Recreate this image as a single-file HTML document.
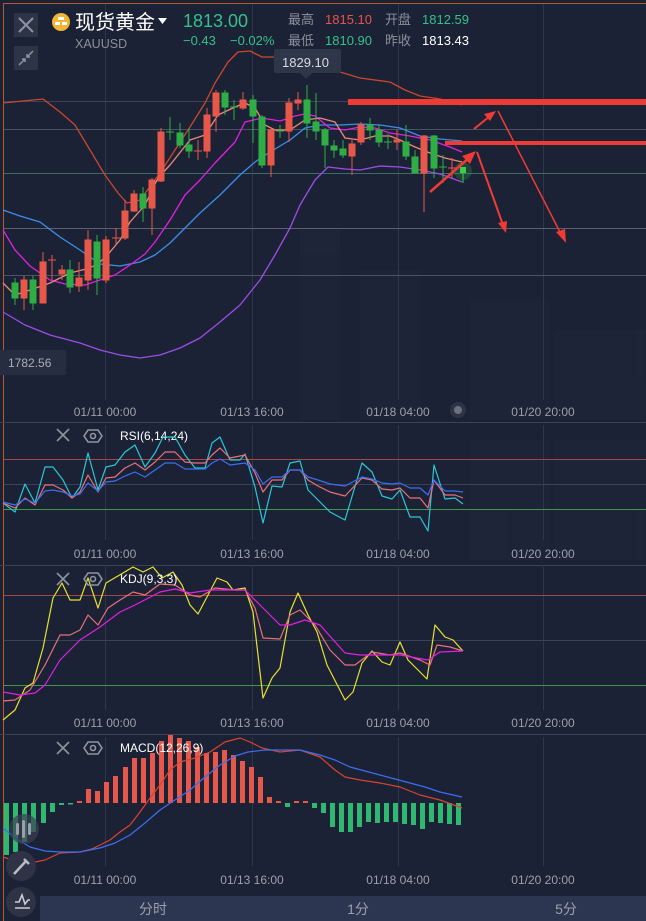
<!DOCTYPE html>
<html><head><meta charset="utf-8"><style>
html,body{margin:0;padding:0;background:#1c2235;width:646px;height:921px;overflow:hidden;font-family:"Liberation Sans","Noto Sans CJK SC",sans-serif}
svg{display:block}
text{font-family:"Liberation Sans","Noto Sans CJK SC",sans-serif}
</style></head><body>
<svg width="646" height="921" viewBox="0 0 646 921" xmlns="http://www.w3.org/2000/svg">
<rect width="646" height="921" fill="#1c2235"/>
<!-- faint buildings -->
<g fill="#232a3e" opacity="0.35">
<rect x="300" y="230" width="40" height="190"/><rect x="360" y="270" width="60" height="150"/><rect x="470" y="300" width="80" height="120"/><rect x="555" y="330" width="90" height="90"/>
<rect x="470" y="440" width="80" height="120"/><rect x="555" y="440" width="90" height="120"/>
</g>
<!-- borders -->
<line x1="3.5" y1="3" x2="3.5" y2="921" stroke="#b85a2a" stroke-width="1"/>
<line x1="3" y1="3.5" x2="646" y2="3.5" stroke="#b85a2a" stroke-width="1"/>
<!-- grid verticals -->
<g stroke="#2e364b" stroke-width="1">
<line x1="105.5" y1="4" x2="105.5" y2="400"/><line x1="252.5" y1="4" x2="252.5" y2="400"/><line x1="398.5" y1="4" x2="398.5" y2="400"/><line x1="543.5" y1="4" x2="543.5" y2="400"/>
<line x1="105.5" y1="425" x2="105.5" y2="540"/><line x1="252.5" y1="425" x2="252.5" y2="540"/><line x1="398.5" y1="425" x2="398.5" y2="540"/><line x1="543.5" y1="425" x2="543.5" y2="540"/>
<line x1="105.5" y1="567" x2="105.5" y2="710"/><line x1="252.5" y1="567" x2="252.5" y2="710"/><line x1="398.5" y1="567" x2="398.5" y2="710"/><line x1="543.5" y1="567" x2="543.5" y2="710"/>
<line x1="105.5" y1="737" x2="105.5" y2="866"/><line x1="252.5" y1="737" x2="252.5" y2="866"/><line x1="398.5" y1="737" x2="398.5" y2="866"/><line x1="543.5" y1="737" x2="543.5" y2="866"/>
</g>
<!-- main horizontals -->
<line x1="4" y1="129.5" x2="646" y2="129.5" stroke="#4a5266"/>
<line x1="4" y1="173.5" x2="646" y2="173.5" stroke="#3d6b66"/>
<line x1="4" y1="228.5" x2="646" y2="228.5" stroke="#5a6070"/>
<line x1="4" y1="275.5" x2="646" y2="275.5" stroke="#4a5266"/>
<line x1="4" y1="101.5" x2="646" y2="101.5" stroke="#3a4256"/>
<!-- bands -->
<g fill="none" stroke-width="1.3" stroke-linejoin="round">
<polyline stroke="#c8472e" points="3,103 43,99 60,112 75,125 90,150 105,175 118,193 127,203 140,200 160,173 175,150 190,127 205,103 215,83 228,62 238,52 250,51 262,57 272,57 285,58 300,64 320,66 340,72 360,78 390,82 405,90 420,96 440,99 462,105"/>
<polyline stroke="#3b8ee8" points="3,210 20,216 40,222 60,237 80,250 100,264 120,266 140,262 155,255 170,243 185,228 200,213 220,195 240,175 255,162 270,152 290,140 305,128 320,125 340,125 360,124 380,125 400,128 420,136 440,139 462,141"/>
<polyline stroke="#9b4de6" points="3,312 25,325 50,335 80,343 100,350 120,355 140,358 160,355 180,348 200,338 220,322 240,305 260,280 275,255 290,228 300,205 315,180 328,167 345,169 360,170 380,166 400,167 420,170 440,174 462,182"/>
<polyline stroke="#e020e0" points="3,230 15,250 30,266 50,280 65,284 85,285 100,280 115,275 130,265 145,254 155,242 170,220 185,195 200,180 215,163 235,142 245,122 262,118 280,121 295,116 305,114 315,116 330,128 345,130 360,127 375,128 390,133 410,136 430,140 450,147 462,152"/>
<polyline stroke="#e88a7a" points="3,283 15,295 30,290 50,283 70,273 90,268 100,262 110,252 120,240 130,222 145,205 158,178 170,165 190,140 205,135 218,115 235,107 245,103 255,108 265,125 275,130 290,130 305,120 320,118 335,122 345,138 360,140 375,136 390,136 400,140 415,147 430,153 445,158 462,162"/>
</g>
<!-- candles -->
<g stroke-width="1">
<g fill="#2fae45" stroke="#2fae45">
<line x1="15" y1="278" x2="15" y2="305"/><rect x="12" y="283" width="6" height="15"/>
<line x1="33" y1="276" x2="33" y2="310"/><rect x="30" y="280" width="6" height="23"/>
<line x1="70" y1="260" x2="70" y2="293"/><rect x="67" y="270" width="6" height="17"/>
<line x1="97" y1="235" x2="97" y2="295"/><rect x="94" y="242" width="6" height="36"/>
<line x1="143" y1="187" x2="143" y2="222"/><rect x="140" y="194" width="6" height="14"/>
<line x1="170" y1="117" x2="170" y2="140"/><line x1="166" y1="132" x2="174" y2="132"/>
<line x1="180" y1="123" x2="180" y2="148"/><rect x="177" y="133" width="6" height="12"/>
<line x1="189" y1="128" x2="189" y2="158"/><rect x="186" y="145" width="6" height="6"/>
<line x1="225" y1="90" x2="225" y2="115"/><rect x="222" y="93" width="6" height="14"/>
<line x1="234" y1="100" x2="234" y2="120"/><line x1="230" y1="107" x2="238" y2="107"/>
<line x1="253" y1="95" x2="253" y2="143"/><rect x="250" y="100" width="6" height="16"/>
<line x1="262" y1="115" x2="262" y2="168"/><rect x="259" y="117" width="6" height="48"/>
<line x1="280" y1="125" x2="280" y2="138"/><line x1="276" y1="131" x2="284" y2="131"/>
<line x1="307" y1="85" x2="307" y2="138"/><rect x="304" y="100" width="6" height="23"/>
<line x1="316" y1="93" x2="316" y2="140"/><rect x="313" y="122" width="6" height="9"/>
<line x1="325" y1="128" x2="325" y2="168"/><rect x="322" y="130" width="6" height="15"/>
<line x1="334" y1="140" x2="334" y2="158"/><rect x="331" y="146" width="6" height="4"/>
<line x1="343" y1="140" x2="343" y2="158"/><rect x="340" y="149" width="6" height="6"/>
<line x1="370" y1="118" x2="370" y2="140"/><rect x="367" y="125" width="6" height="5"/>
<line x1="379" y1="125" x2="379" y2="147"/><rect x="376" y="130" width="6" height="12"/>
<line x1="388" y1="134" x2="388" y2="149"/><line x1="384" y1="142" x2="392" y2="142"/>
<line x1="406" y1="125" x2="406" y2="160"/><rect x="403" y="142" width="6" height="14"/>
<line x1="415" y1="150" x2="415" y2="173"/><rect x="412" y="157" width="6" height="16"/>
<line x1="434" y1="135" x2="434" y2="178"/><rect x="431" y="136" width="6" height="32"/>
<line x1="443" y1="155" x2="443" y2="183"/><line x1="439" y1="167" x2="447" y2="167"/>
</g>
<g fill="#e8584a" stroke="#e8584a">
<line x1="24" y1="276" x2="24" y2="310"/><rect x="21" y="280" width="6" height="18"/>
<line x1="43" y1="252" x2="43" y2="303"/><rect x="40" y="262" width="6" height="41"/>
<line x1="52" y1="255" x2="52" y2="280"/><line x1="48" y1="260" x2="56" y2="260"/>
<line x1="62" y1="265" x2="62" y2="280"/><rect x="59" y="270" width="6" height="4"/>
<line x1="79" y1="262" x2="79" y2="292"/><rect x="76" y="278" width="6" height="8"/>
<line x1="88" y1="230" x2="88" y2="290"/><rect x="85" y="240" width="6" height="40"/>
<line x1="106" y1="236" x2="106" y2="283"/><rect x="103" y="240" width="6" height="40"/>
<line x1="116" y1="228" x2="116" y2="245"/><line x1="112" y1="238" x2="120" y2="238"/>
<line x1="125" y1="200" x2="125" y2="240"/><rect x="122" y="211" width="6" height="27"/>
<line x1="134" y1="190" x2="134" y2="212"/><rect x="131" y="194" width="6" height="17"/>
<line x1="152" y1="178" x2="152" y2="235"/><rect x="149" y="180" width="6" height="28"/>
<line x1="161" y1="128" x2="161" y2="182"/><rect x="158" y="132" width="6" height="49"/>
<line x1="198" y1="140" x2="198" y2="160"/><line x1="194" y1="151" x2="202" y2="151"/>
<line x1="207" y1="108" x2="207" y2="158"/><rect x="204" y="115" width="6" height="36"/>
<line x1="216" y1="90" x2="216" y2="132"/><rect x="213" y="93" width="6" height="23"/>
<line x1="243" y1="92" x2="243" y2="110"/><rect x="240" y="100" width="6" height="8"/>
<line x1="271" y1="128" x2="271" y2="177"/><rect x="268" y="130" width="6" height="35"/>
<line x1="289" y1="98" x2="289" y2="142"/><rect x="286" y="103" width="6" height="28"/>
<line x1="298" y1="92" x2="298" y2="110"/><rect x="295" y="100" width="6" height="3"/>
<line x1="352" y1="140" x2="352" y2="175"/><rect x="349" y="144" width="6" height="12"/>
<line x1="361" y1="122" x2="361" y2="145"/><rect x="358" y="125" width="6" height="17"/>
<line x1="397" y1="130" x2="397" y2="150"/><rect x="394" y="140" width="6" height="2"/>
<line x1="424" y1="135" x2="424" y2="212"/><rect x="421" y="136" width="6" height="37"/>
<line x1="452" y1="158" x2="452" y2="178"/><line x1="448" y1="168" x2="456" y2="168"/>
</g>
<circle cx="463" cy="171" r="9" fill="#2fae45" opacity="0.25"/>
<rect x="460" y="167" width="6" height="6" fill="#3ccd4a"/><line x1="463" y1="172" x2="463" y2="183" stroke="#3ccd4a"/>
</g>
<!-- annotations -->
<g fill="#f03a35" stroke="#f03a35">
<rect x="348" y="99" width="298" height="6" stroke="none"/>
<rect x="445" y="141" width="201" height="4" stroke="none"/>
<line x1="430" y1="192" x2="470" y2="157" stroke-width="2.5"/><polygon points="476,151 462,156 470,164" stroke="none"/>
<line x1="474" y1="129" x2="490" y2="116" stroke-width="2"/><polygon points="496,111 484,114 490,121" stroke="none"/>
<line x1="498" y1="111" x2="562" y2="236" stroke-width="1.5"/><polygon points="566,243 556,232 565,229" stroke="none"/>
<line x1="477" y1="152" x2="503" y2="225" stroke-width="2"/><polygon points="506,233 498,223 507,221" stroke="none"/>
</g>
<!-- price labels -->
<rect x="274" y="49" width="67" height="24" rx="2" fill="#2e3649"/>
<polygon points="300,73 312,73 306,79" fill="#2e3649"/>
<text x="282" y="67" fill="#d8dbe2" font-size="13">1829.10</text>
<rect x="0" y="350" width="66" height="25" fill="#262d40"/>
<text x="8" y="367" fill="#a8adb8" font-size="12">1782.56</text>
<!-- header -->
<rect x="14" y="13" width="24" height="24" fill="#2d3446"/>
<path d="M19 18 L33 32 M33 18 L19 32" stroke="#8d93a0" stroke-width="2"/>
<rect x="14" y="46" width="24" height="24" fill="#2d3446"/>
<path d="M19 65 L25 59 M22 59 L25 59 L25 62 M33 51 L27 57 M27 54 L27 57 L30 57" stroke="#8d93a0" stroke-width="1.5" fill="none"/>
<circle cx="61" cy="22" r="9" fill="#f2b636"/>
<rect x="58" y="17" width="6" height="3" fill="#fff"/><rect x="55" y="22" width="5" height="3" fill="#fff"/><rect x="62" y="22" width="5" height="3" fill="#fff"/>
<text x="75" y="29" fill="#ffffff" font-size="20">现货黄金</text>
<polygon points="158,18 167,18 162.5,24" fill="#ffffff"/>
<text x="75" y="48" fill="#8a909c" font-size="12.5">XAUUSD</text>
<text x="183" y="27" fill="#35c08a" font-size="18">1813.00</text>
<text x="183" y="45" fill="#35c08a" font-size="13">−0.43</text>
<text x="230" y="45" fill="#35c08a" font-size="13">−0.02%</text>
<text x="288" y="24" fill="#8a909c" font-size="13">最高</text>
<text x="325" y="24" fill="#e8524a" font-size="13">1815.10</text>
<text x="385" y="24" fill="#8a909c" font-size="13">开盘</text>
<text x="422" y="24" fill="#35c08a" font-size="13">1812.59</text>
<text x="288" y="45" fill="#8a909c" font-size="13">最低</text>
<text x="325" y="45" fill="#35c08a" font-size="13">1810.90</text>
<text x="385" y="45" fill="#8a909c" font-size="13">昨收</text>
<text x="422" y="45" fill="#ffffff" font-size="13">1813.43</text>
<!-- time axis main -->
<g fill="#9aa0ab" font-size="12" text-anchor="middle">
<text x="105" y="416">01/11 00:00</text><text x="252" y="416">01/13 16:00</text><text x="398" y="416">01/18 04:00</text><text x="543" y="416">01/20 20:00</text>
</g>
<circle cx="458" cy="410" r="8" fill="#2d3446"/><circle cx="458" cy="410" r="4" fill="#6a7080"/>
<line x1="0" y1="422.5" x2="646" y2="422.5" stroke="#3c4356"/>
<!-- RSI -->
<g stroke="#8d93a0" stroke-width="1.6" fill="none"><path d="M57 429 L69 441 M69 429 L57 441"/><polygon points="88,430 98,430 102,436 98,442 88,442 84,436"/><circle cx="93" cy="436" r="2.5"/></g>
<text x="120" y="440" fill="#ffffff" font-size="12">RSI(6,14,24)</text>
<line x1="4" y1="459.5" x2="646" y2="459.5" stroke="#a04848"/>
<line x1="4" y1="484.5" x2="646" y2="484.5" stroke="#3a4256"/>
<line x1="4" y1="509.5" x2="646" y2="509.5" stroke="#3d9a48"/>
<g fill="none" stroke-width="1.2" stroke-linejoin="round">
<polyline stroke="#28c8d6" points="3,503 15,512 25,484 35,503 45,467 53,467 63,480 72,498 80,487 88,453 98,490 106,467 115,465 125,452 135,445 145,467 155,453 163,437 175,437 185,455 195,468 205,468 212,443 220,437 230,460 240,460 245,454 255,487 263,523 272,486 282,487 290,463 300,461 308,490 318,500 330,512 345,520 362,463 372,472 382,496 392,499 400,490 410,517 420,517 428,531 434,465 445,499 455,498 463,504"/>
<polyline stroke="#e8707a" points="3,503 15,508 25,498 35,505 45,485 53,485 63,490 72,498 80,492 88,475 98,492 106,478 115,477 125,468 135,463 145,470 155,462 165,452 175,452 185,462 195,463 205,463 212,455 220,448 230,458 245,455 255,473 263,492 272,480 282,480 290,470 300,470 308,480 318,486 330,492 345,496 362,478 372,480 382,489 392,490 400,488 410,498 420,498 428,508 434,480 445,495 455,495 463,498"/>
<polyline stroke="#3b6ef0" points="3,502 15,505 25,499 35,503 45,491 53,490 63,492 72,496 80,494 88,483 98,491 106,482 115,481 125,476 135,472 145,477 155,470 165,463 175,463 185,469 195,469 205,469 212,463 220,459 230,465 245,463 255,470 263,484 272,477 282,477 290,470 300,470 308,477 318,480 330,484 345,486 362,477 372,479 382,483 392,484 400,483 410,488 420,488 428,495 434,480 445,491 455,491 463,492"/>
</g>
<g fill="#9aa0ab" font-size="12" text-anchor="middle">
<text x="105" y="558">01/11 00:00</text><text x="252" y="558">01/13 16:00</text><text x="398" y="558">01/18 04:00</text><text x="543" y="558">01/20 20:00</text>
</g>
<line x1="0" y1="565.5" x2="646" y2="565.5" stroke="#3c4356"/>
<!-- KDJ -->
<line x1="4" y1="595.5" x2="646" y2="595.5" stroke="#a04848"/>
<line x1="4" y1="640.5" x2="646" y2="640.5" stroke="#3a4256"/>
<line x1="4" y1="685.5" x2="646" y2="685.5" stroke="#3d9a48"/>
<g fill="none" stroke-width="1.2" stroke-linejoin="round">
<polyline stroke="#e8e030" points="3,720 15,710 25,688 33,683 43,648 53,598 62,583 70,600 80,600 88,578 98,608 106,583 123,573 133,567 143,572 153,567 162,578 173,572 182,585 190,605 198,614 217,578 227,582 233,590 245,588 253,612 263,698 272,678 280,668 290,612 298,593 308,615 317,632 327,665 345,700 353,692 362,663 372,651 382,662 390,665 400,642 408,660 427,679 435,625 445,637 453,640 463,651"/>
<polyline stroke="#e8707a" points="3,701 15,700 30,690 45,665 60,635 70,635 80,630 88,615 98,625 108,608 120,600 133,592 145,595 160,584 175,585 190,595 200,597 215,588 235,590 245,590 255,608 263,638 280,639 290,615 300,610 315,625 330,650 345,665 355,665 372,652 390,655 400,653 420,660 430,665 437,645 450,647 463,651"/>
<polyline stroke="#e020e0" points="3,692 20,695 35,693 45,685 60,660 80,640 100,627 120,612 135,605 160,592 175,589 190,593 210,590 245,590 265,610 280,625 290,625 305,620 320,625 345,653 360,655 380,655 400,655 428,660 440,652 463,651"/>
</g>
<g stroke="#8d93a0" stroke-width="1.6" fill="none"><path d="M57 573 L69 585 M69 573 L57 585"/><polygon points="88,573 98,573 102,579 98,585 88,585 84,579"/><circle cx="93" cy="579" r="2.5"/></g>
<text x="120" y="583" fill="#ffffff" font-size="12">KDJ(9,3,3)</text>
<g fill="#9aa0ab" font-size="12" text-anchor="middle">
<text x="105" y="727">01/11 00:00</text><text x="252" y="727">01/13 16:00</text><text x="398" y="727">01/18 04:00</text><text x="543" y="727">01/20 20:00</text>
</g>
<line x1="0" y1="734.5" x2="646" y2="734.5" stroke="#3c4356"/>
<!-- MACD bars -->
<g fill="#2fb870">
<rect x="4" y="803" width="5" height="52"/><rect x="13" y="803" width="5" height="49"/><rect x="22" y="803" width="5" height="39"/><rect x="31" y="803" width="5" height="29"/><rect x="41" y="803" width="5" height="20"/><rect x="50" y="803" width="5" height="9"/><rect x="59" y="803" width="5" height="2"/><rect x="68" y="803" width="5" height="1.5"/>
<rect x="285" y="803" width="5" height="4"/><rect x="312" y="803" width="5" height="5"/><rect x="321" y="803" width="5" height="10"/><rect x="330" y="803" width="5" height="24"/><rect x="339" y="803" width="5" height="29"/><rect x="348" y="803" width="5" height="29"/><rect x="357" y="803" width="5" height="24"/><rect x="366" y="803" width="5" height="19"/><rect x="375" y="803" width="5" height="20"/><rect x="384" y="803" width="5" height="19"/><rect x="393" y="803" width="5" height="19"/><rect x="402" y="803" width="5" height="21"/><rect x="411" y="803" width="5" height="22"/><rect x="420" y="803" width="5" height="26"/><rect x="429" y="803" width="5" height="19"/><rect x="438" y="803" width="5" height="20"/><rect x="447" y="803" width="5" height="21"/><rect x="456" y="803" width="5" height="22"/>
</g>
<g fill="#e8584a">
<rect x="77" y="801" width="5" height="2"/><rect x="86" y="789" width="5" height="14"/><rect x="95" y="791" width="5" height="12"/><rect x="104" y="782" width="5" height="21"/><rect x="113" y="776" width="5" height="27"/><rect x="123" y="767" width="5" height="36"/><rect x="132" y="758" width="5" height="45"/><rect x="141" y="758" width="5" height="45"/><rect x="150" y="753" width="5" height="50"/><rect x="159" y="741" width="5" height="62"/><rect x="168" y="735" width="5" height="68"/><rect x="177" y="738" width="5" height="65"/><rect x="186" y="741" width="5" height="62"/><rect x="195" y="747" width="5" height="56"/><rect x="204" y="753" width="5" height="50"/><rect x="213" y="752" width="5" height="51"/><rect x="222" y="750" width="5" height="53"/><rect x="231" y="755" width="5" height="48"/><rect x="240" y="761" width="5" height="42"/><rect x="249" y="767" width="5" height="36"/><rect x="258" y="777" width="5" height="26"/><rect x="267" y="797" width="5" height="6"/><rect x="276" y="801" width="5" height="2"/><rect x="294" y="801" width="5" height="2"/><rect x="303" y="801" width="5" height="2"/>
</g>
<g fill="none" stroke-width="1.2" stroke-linejoin="round">
<polyline stroke="#d8442e" points="3,857 15,861 30,863 45,860 60,853 80,852 92,849 100,845 110,840 120,832 130,825 140,812 150,798 160,785 170,770 180,762 195,758 210,752 225,742 240,738 250,742 262,748 280,752 300,750 320,757 335,770 345,777 360,780 380,783 400,787 420,795 440,800 462,808"/>
<polyline stroke="#3b6ef0" points="3,828 15,838 30,847 45,851 60,852 80,852 100,848 115,843 130,835 145,823 160,810 175,800 190,790 205,777 220,765 235,756 248,752 265,750 300,750 320,755 335,760 350,767 365,771 380,775 395,779 410,783 425,787 440,792 462,797"/>
</g>
<g stroke="#8d93a0" stroke-width="1.6" fill="none"><path d="M57 742 L69 754 M69 742 L57 754"/><polygon points="88,742 98,742 102,748 98,754 88,754 84,748"/><circle cx="93" cy="748" r="2.5"/></g>
<text x="120" y="752" fill="#ffffff" font-size="12">MACD(12,26,9)</text>
<g fill="#9aa0ab" font-size="12" text-anchor="middle">
<text x="105" y="884">01/11 00:00</text><text x="252" y="884">01/13 16:00</text><text x="398" y="884">01/18 04:00</text><text x="543" y="884">01/20 20:00</text>
</g>
<!-- left floating buttons -->
<circle cx="24" cy="829" r="15" fill="#3a4052" opacity="0.7"/>
<g fill="#9aa0ab"><rect x="16" y="823" width="3" height="12" rx="1.5"/><rect x="22" y="820" width="3" height="18" rx="1.5"/><rect x="28" y="823" width="3" height="12" rx="1.5"/></g>
<circle cx="21" cy="866" r="15" fill="#2e3446"/>
<path d="M14 874 L26 861 M24 859 L29 864" stroke="#b8bcc6" stroke-width="2.5" fill="none"/>
<circle cx="21" cy="902" r="15" fill="#2e3446"/>
<path d="M15 902 L19 902 L22 895 L25 904 L28 900 L30 900 M15 908 L30 908" stroke="#c8ccd4" stroke-width="1.6" fill="none"/>
<!-- bottom bar -->
<rect x="40" y="896" width="606" height="25" fill="#2c3650"/>
<g fill="#9aa0ab" font-size="14" text-anchor="middle">
<text x="153" y="914">分时</text><text x="358" y="914">1分</text><text x="566" y="914">5分</text>
</g>
</svg>
</body></html>
